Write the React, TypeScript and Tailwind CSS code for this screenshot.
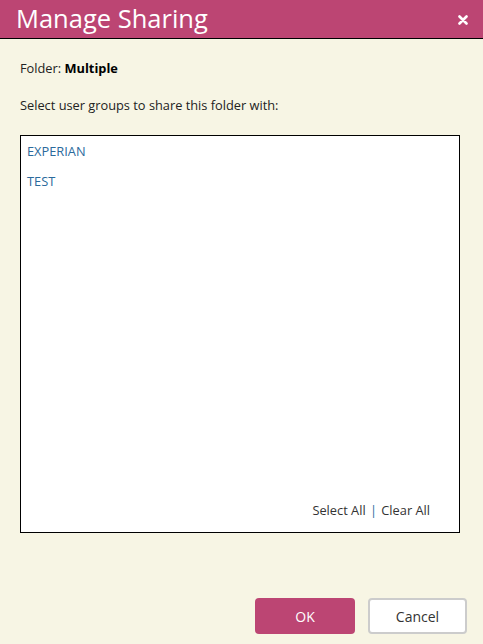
export default function App() {
  return (
    <div
      className="w-[483px] h-[644px] bg-[#f7f5e4] flex flex-col overflow-hidden"
      style={{ fontFamily: '"Open Sans", "Noto Sans", sans-serif' }}
    >
      <div className="h-[39px] bg-[#bc4573] border-b border-black flex items-center justify-between pl-[16px] pr-[15px] shrink-0">
        <span className="text-white text-[25.5px] leading-none">Manage Sharing</span>
        <svg width="10" height="10" viewBox="0 0 10 10" className="mt-[2px]">
          <path d="M1.5 1.5 L8.5 8.5 M8.5 1.5 L1.5 8.5" stroke="white" strokeWidth="2.6" strokeLinecap="round" />
        </svg>
      </div>
      <div className="px-[20px] pt-[21px] flex flex-col">
        <div className="text-[12.8px] text-[#222] leading-[16px]">
          Folder: <span className="font-bold text-black">Multiple</span>
        </div>
        <div className="text-[12.8px] text-[#222] leading-[16px] mt-[21px]">
          Select user groups to share this folder with:
        </div>
        <div className="mt-[22px] w-[440px] h-[398px] bg-white border border-black flex flex-col justify-between pl-[6px] pt-[7px] pb-[14px] pr-[29px]">
          <div className="flex flex-col gap-[14px] text-[12.8px] leading-[16px] text-[#2b6a9c]">
            <span>EXPERIAN</span>
            <span>TEST</span>
          </div>
          <div className="self-end text-[12.8px] leading-[16px] text-[#333]">
            Select All <span className="text-[#2b6a9c] mx-[1px]">|</span> Clear All
          </div>
        </div>
      </div>
      <div className="flex justify-end gap-[13px] pr-[16px] mt-[65px]">
        <button className="w-[100px] h-[36px] rounded-[4px] bg-[#bc4573] text-white text-[14px]">OK</button>
        <button className="w-[99px] h-[36px] rounded-[4px] bg-white border-2 border-[#cccccc] text-[#333] text-[14px]">Cancel</button>
      </div>
    </div>
  );
}
